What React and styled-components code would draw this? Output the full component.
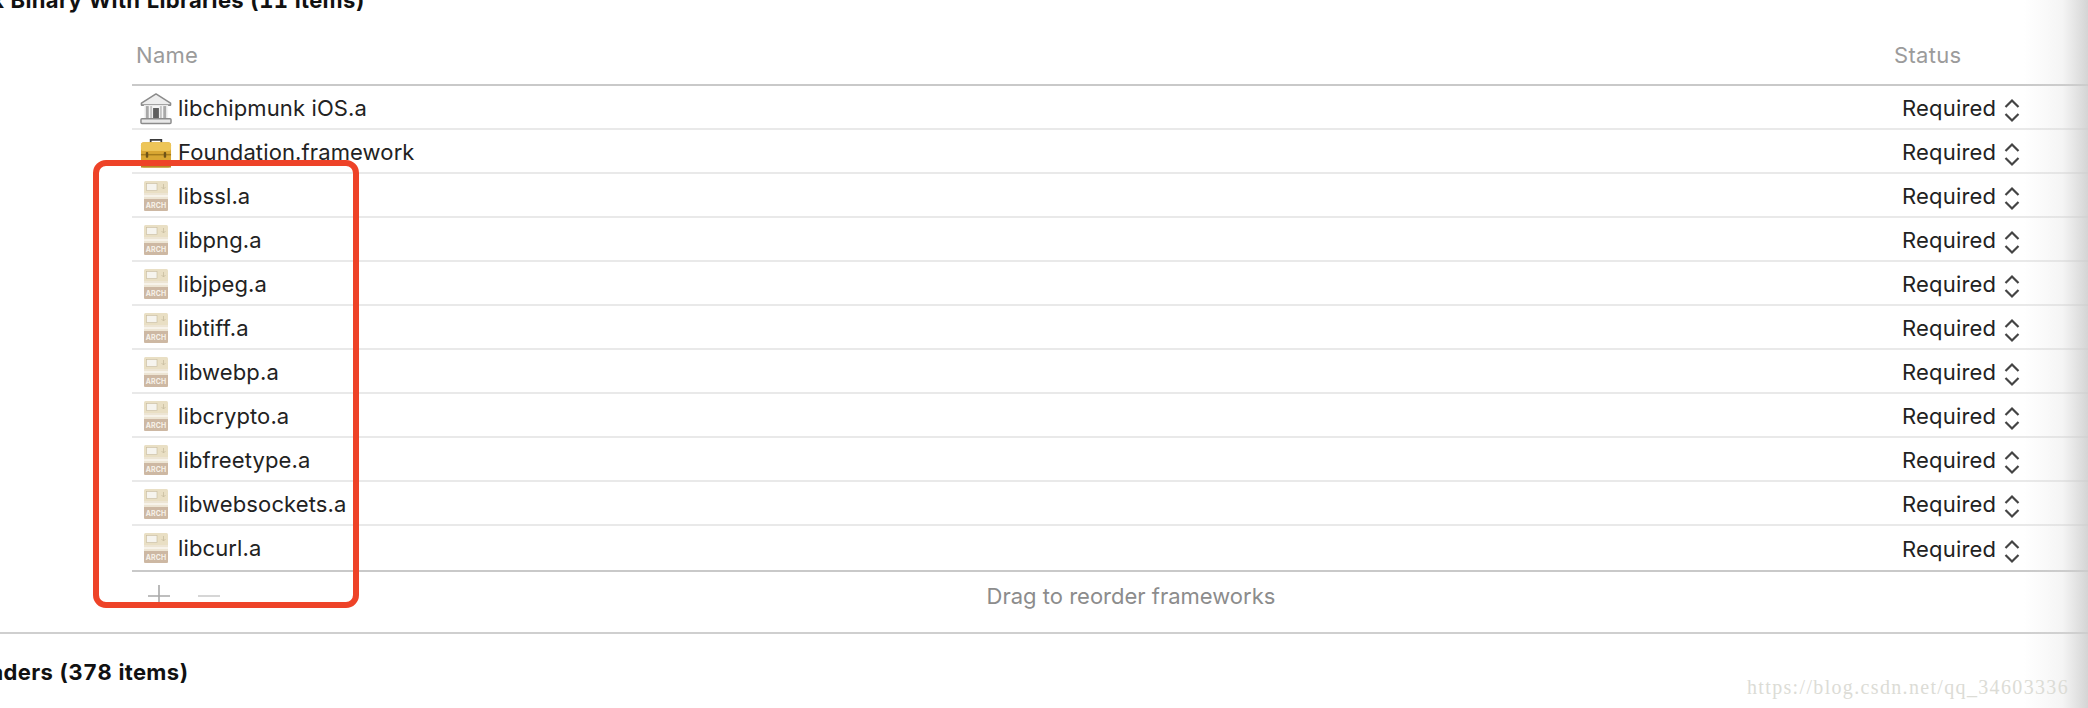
import React from 'react';
import styled, { createGlobalStyle } from 'styled-components';

const GlobalStyle = createGlobalStyle`
  html, body {
    margin: 0;
    padding: 0;
    background: #fff;
  }
`;

const Page = styled.div`
  position: relative;
  width: 2088px;
  height: 708px;
  overflow: hidden;
  background: #fff;
  font-family: Inter, "Liberation Sans", sans-serif;
  color: #222;
`;

const SectionTitle = styled.h2`
  margin: 0;
  height: ${(p) => p.$height}px;
  line-height: ${(p) => p.$height}px;
  margin-left: ${(p) => p.$left}px;
  margin-top: ${(p) => p.$top}px;
  font-size: 22px;
  font-weight: 700;
  font-feature-settings: "tnum";
  letter-spacing: 0.35px;
  color: #111;
  white-space: nowrap;
`;

const Table = styled.div`
  width: 2000px;
  margin-left: 132px;
  margin-top: 21px;
`;

const HeaderRow = styled.div`
  display: flex;
  align-items: center;
  height: 50px;
  padding-bottom: 10px;
  box-sizing: border-box;
  border-bottom: 2px solid #c9c9c9;
  font-size: 22px;
  letter-spacing: 0.3px;
  color: #9b9b9b;
`;

const NameHead = styled.div`
  width: 1762px;
  padding-left: 4px;
  box-sizing: border-box;
`;

const Row = styled.div`
  display: flex;
  align-items: center;
  height: 44px;
  box-sizing: border-box;
  border-bottom: ${(p) => (p.$last ? 'none' : '2px solid #e9e9e9')};
  font-size: 22px;
`;

const NameCell = styled.div`
  display: flex;
  align-items: center;
  width: 1770px;
  padding-top: ${(p) => (p.$last ? '0' : '2px')};
  padding-left: 8px;
  box-sizing: border-box;
  letter-spacing: 0.12px;
`;

const IconSlot = styled.div`
  display: flex;
  justify-content: center;
  width: 32px;
  margin-right: 6px;
`;

const StatusCell = styled.div`
  display: flex;
  align-items: center;
  gap: 8px;
  padding-top: 2px;
  letter-spacing: 0.2px;
`;

const StepperWrap = styled.div`
  display: flex;
  margin-top: 5px;
`;

const Footer = styled.div`
  display: flex;
  align-items: center;
  height: 62px;
  box-sizing: border-box;
  padding: 0 90px 12px 16px;
  border-top: 2px solid #c9c9c9;
`;

const FootButtons = styled.div`
  display: flex;
  gap: 28px;
  width: 72px;
`;

const FootNote = styled.div`
  flex: 1;
  text-align: center;
  font-size: 22px;
  color: #8c8c8c;
`;

const SectionLine = styled.div`
  height: 2px;
  background: #cfcfcf;
`;

const Highlight = styled.div`
  position: absolute;
  left: 93px;
  top: 160px;
  width: 266px;
  height: 448px;
  box-sizing: border-box;
  border: 6px solid #ee4328;
  border-radius: 13px;
`;

const EdgeShade = styled.div`
  position: absolute;
  top: 0;
  right: 0;
  width: 64px;
  height: 100%;
  background: linear-gradient(to right, rgba(214, 214, 214, 0), rgba(214, 214, 214, 0.25) 60%, rgba(205, 205, 205, 0.85));
`;

const Watermark = styled.div`
  position: absolute;
  left: 1747px;
  top: 676px;
  font-family: "Liberation Serif", serif;
  font-size: 20px;
  letter-spacing: 1.34px;
  color: #dcdcd6;
  white-space: nowrap;
`;

const BankIcon = () => (
  <svg width="33" height="33" viewBox="0 0 33 33">
    <path d="M16.5 1.5 L31.5 11 L31.5 13 L1.5 13 L1.5 11 Z" fill="#ededed" stroke="#8b8b8b" strokeWidth="1.6" strokeLinejoin="round" />
    <rect x="4" y="13" width="25" height="14" fill="#f4f4f4" />
    <rect x="6" y="14" width="3" height="13" fill="#a8a8a8" />
    <rect x="10.5" y="14" width="2" height="13" fill="#c4c4c4" />
    <rect x="20.5" y="14" width="2" height="13" fill="#c4c4c4" />
    <rect x="24" y="14" width="3" height="13" fill="#a8a8a8" />
    <rect x="13.5" y="16" width="6" height="11" fill="#5e5e5e" />
    <rect x="1" y="27" width="31" height="5" rx="1" fill="#e8e8e8" stroke="#8b8b8b" strokeWidth="1.5" />
  </svg>
);

const ToolboxIcon = () => (
  <svg width="33" height="33" viewBox="0 0 33 33">
    <path d="M11 7 V3.5 H22 V7" fill="none" stroke="#3a3a3a" strokeWidth="1.8" />
    <rect x="1" y="6" width="31" height="26" rx="3" fill="#d9a733" />
    <rect x="1" y="6" width="31" height="9" rx="3" fill="#edc558" />
    <rect x="1" y="18" width="31" height="1.5" fill="#a67c1c" />
    <rect x="1" y="27" width="31" height="5" fill="#b98a22" />
    <rect x="6" y="16" width="2.5" height="6" rx="1" fill="#6d5318" />
    <rect x="24.5" y="16" width="2.5" height="6" rx="1" fill="#6d5318" />
  </svg>
);

const ArchIcon = () => (
  <svg width="24" height="30" viewBox="0 0 24 30">
    <rect x="0" y="0" width="24" height="30" rx="1.5" fill="#e9dfc4" />
    <rect x="2.5" y="2.5" width="10.5" height="7" fill="#f6f4ee" stroke="#c7bb9f" strokeWidth="0.6" />
    <path d="M19.5 3 V8 M17.5 6 L19.5 8 L21.5 6" fill="none" stroke="#c8bc9f" strokeWidth="0.8" />
    <rect x="0" y="12" width="24" height="6" fill="#ede5d4" />
    <rect x="0" y="14.3" width="24" height="1.4" fill="#fbf9f4" />
    <path d="M0 18 H24 V28.5 A1.5 1.5 0 0 1 22.5 30 H1.5 A1.5 1.5 0 0 1 0 28.5 Z" fill="#cdb8a3" />
    <text x="12" y="27.2" textAnchor="middle" fontFamily="Inter, sans-serif" fontSize="6.9" fontWeight="700" fill="#f7f2ea">ARCH</text>
  </svg>
);

const Stepper = () => (
  <svg width="16" height="25" viewBox="0 0 16 25">
    <path d="M1.5 9 L8 2.5 L14.5 9" fill="none" stroke="#444" strokeWidth="2.2" />
    <path d="M1.5 16 L8 22.5 L14.5 16" fill="none" stroke="#444" strokeWidth="2.2" />
  </svg>
);

const PlusIcon = () => (
  <svg width="22" height="22" viewBox="0 0 22 22">
    <path d="M0 11 H22 M11 0 V22" stroke="#a9a9a9" strokeWidth="1.6" />
  </svg>
);

const MinusIcon = () => (
  <svg width="22" height="22" viewBox="0 0 22 22">
    <path d="M0 11 H22" stroke="#d2d2d2" strokeWidth="1.8" />
  </svg>
);

const libraries = [
  { name: 'libchipmunk iOS.a', icon: <BankIcon /> },
  { name: 'Foundation.framework', icon: <ToolboxIcon /> },
  { name: 'libssl.a', icon: <ArchIcon /> },
  { name: 'libpng.a', icon: <ArchIcon /> },
  { name: 'libjpeg.a', icon: <ArchIcon /> },
  { name: 'libtiff.a', icon: <ArchIcon /> },
  { name: 'libwebp.a', icon: <ArchIcon /> },
  { name: 'libcrypto.a', icon: <ArchIcon /> },
  { name: 'libfreetype.a', icon: <ArchIcon /> },
  { name: 'libwebsockets.a', icon: <ArchIcon /> },
  { name: 'libcurl.a', icon: <ArchIcon /> },
];

const App = () => (
  <>
    <GlobalStyle />
    <Page>
      <SectionTitle $height={30} $left={-42} $top={-15}>Link Binary With Libraries (11 items)</SectionTitle>
      <Table>
        <HeaderRow>
          <NameHead>Name</NameHead>
          <div>Status</div>
        </HeaderRow>
        {libraries.map((lib, i) => (
          <Row key={lib.name} $last={i === libraries.length - 1}>
            <NameCell $last={i === libraries.length - 1}>
              <IconSlot>{lib.icon}</IconSlot>
              {lib.name}
            </NameCell>
            <StatusCell>
              Required
              <StepperWrap>
                <Stepper />
              </StepperWrap>
            </StatusCell>
          </Row>
        ))}
        <Footer>
          <FootButtons>
            <PlusIcon />
            <MinusIcon />
          </FootButtons>
          <FootNote>Drag to reorder frameworks</FootNote>
        </Footer>
      </Table>
      <SectionLine />
      <SectionTitle $height={30} $left={-40} $top={23}>Headers (378 items)</SectionTitle>
      <Highlight />
      <EdgeShade />
      <Watermark>https://blog.csdn.net/qq_34603336</Watermark>
    </Page>
  </>
);

export default App;
